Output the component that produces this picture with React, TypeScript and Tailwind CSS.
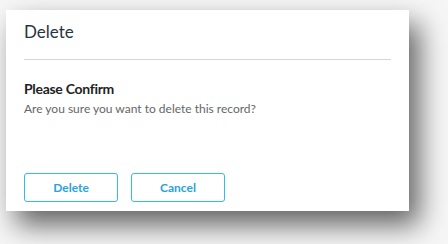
export default function App() {
  return (
    <div className="w-[448px] h-[244px] bg-[#f6f6f6] pl-[6px] pt-[10px] overflow-hidden" style={{ fontFamily: '"Lato", "Noto Sans", sans-serif' }}>
      <div className="w-[403px] h-[201px] bg-white shadow-[10px_14px_26px_rgba(0,0,0,0.6)] flex flex-col px-[18px]">
        <div className="h-[50px] border-b border-[#d6d6d6] pt-[10px]">
          <h2 className="text-[17px] text-[#2a3440] leading-[24px]">Delete</h2>
        </div>
        <div className="pt-[20px]">
          <h3 className="text-[14px] font-bold text-[#222] leading-[18px] tracking-[-0.3px]">Please Confirm</h3>
          <p className="text-[12px] text-[#666] leading-[16px] mt-[3px]">Are you sure you want to delete this record?</p>
        </div>
        <div className="flex gap-[13px] mt-auto mb-[9px]">
          <button className="w-[94px] h-[29px] border border-[#33bbea] rounded-[3px] text-[12px] font-bold text-[#2aa3d9]">Delete</button>
          <button className="w-[94px] h-[29px] border border-[#33bbea] rounded-[3px] text-[12px] font-bold text-[#2aa3d9]">Cancel</button>
        </div>
      </div>
    </div>
  )
}
